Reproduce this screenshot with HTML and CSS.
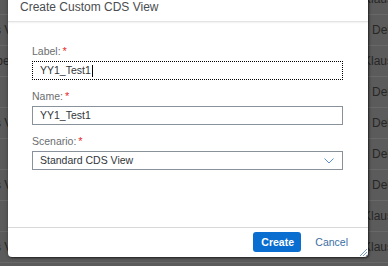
FILE: index.html
```html
<!DOCTYPE html>
<html>
<head>
<meta charset="utf-8">
<link rel="stylesheet" href="styles.css">
</head>
<body>
<div class="backdrop">
  <div class="row"><span class="left"></span><span class="right">Klaus</span></div>
  <div class="row"><span class="left"><span class="view">s View</span></span><span class="right dell">Dell</span></div>
  <div class="row"><span class="left"><span class="cube">Cube</span></span><span class="right">Klaus</span></div>
  <div class="row"><span class="left"></span><span class="right dell">Dell</span></div>
  <div class="row"><span class="left"><span class="view">s View</span></span><span class="right dell">Dell</span></div>
  <div class="row"><span class="left"></span><span class="right dell">Dell</span></div>
  <div class="row"><span class="left"><span class="view">s View</span></span><span class="right dell">Dell</span></div>
  <div class="row"><span class="left"></span><span class="right">Klaus</span></div>
  <div class="row"><span class="left"><span class="view">s View</span></span><span class="right">Klaus</span></div>
  <div class="row"><span class="left"></span><span class="right dell">Dell</span></div>
</div>

<div class="dialog">
  <div class="dialog-header">Create Custom CDS View</div>
  <div class="dialog-content">
    <div class="field">
      <div class="label">Label:<span class="req">*</span></div>
      <div class="input focused">YY1_Test1<span class="caret"></span></div>
    </div>
    <div class="field">
      <div class="label">Name:<span class="req">*</span></div>
      <div class="input">YY1_Test1</div>
    </div>
    <div class="field">
      <div class="label">Scenario:<span class="req">*</span></div>
      <div class="input select">
        <span>Standard CDS View</span>
        <svg class="chevron" width="10" height="6" viewBox="0 0 10 6"><polyline points="0.5,0.5 5,5 9.5,0.5" fill="none" stroke="#5b8fd0" stroke-width="1"/></svg>
      </div>
    </div>
  </div>
  <div class="dialog-footer">
    <button class="btn primary">Create</button>
    <button class="btn link">Cancel</button>
  </div>
  <svg class="grip" width="7" height="7" viewBox="0 0 7 7"><path d="M0,7 L7,0 M3,7 L7,3 M6,7 L7,6" stroke="#7a9cc4" stroke-width="1"/></svg>
</div>
</body>
</html>
```

FILE: styles.css
```css
html, body {
  margin: 0;
  padding: 0;
}
body {
  width: 388px;
  height: 266px;
  overflow: hidden;
  background: #5b5b5b;
  font-family: "Liberation Sans", Arial, sans-serif;
  position: relative;
}
.backdrop {
  margin-top: -16px;
}
.row {
  height: 30px;
  border-bottom: 1px solid #686868;
  display: flex;
  align-items: center;
  font-size: 12px;
  color: #272727;
  white-space: nowrap;
}
.left {
  flex: none;
  width: 363px;
  overflow: visible;
}
.view { margin-left: -5px; }
.cube { margin-left: -19px; }
.right.dell { padding-left: 9px; }

.dialog {
  position: absolute;
  left: 8px;
  top: -18px;
  width: 360px;
  height: 275px;
  background: #fff;
  border-radius: 4px;
  box-shadow: 1px 1px 2px rgba(0,0,0,0.55), 0 0 4px rgba(0,0,0,0.3);
  display: flex;
  flex-direction: column;
}
.dialog-header {
  height: 40px;
  box-sizing: border-box;
  padding: 17px 0 0 12px;
  line-height: 16px;
  font-size: 12px;
  color: #4a4d50;
  border-bottom: 1px solid #e3e3e3;
  box-shadow: 0 1px 2px rgba(0,0,0,0.06);
  background: #fff;
  border-radius: 4px 4px 0 0;
}
.dialog-content {
  flex: 1;
  padding: 21px 25px 0 24px;
  display: flex;
  flex-direction: column;
  gap: 8px;
}
.field {
  display: flex;
  flex-direction: column;
  gap: 1px;
}
.label {
  font-size: 10.5px;
  line-height: 17px;
  color: #6a6d70;
}
.req {
  color: #e52929;
  margin-left: 2px;
  font-size: 11px;
}
.input {
  height: 19px;
  box-sizing: border-box;
  border: 1px solid #89919a;
  padding: 0 7px;
  font-size: 10.5px;
  line-height: 17px;
  color: #32363a;
  display: flex;
  align-items: center;
}
.input.focused {
  border: 1px dotted #000;
}
.caret {
  display: inline-block;
  width: 1px;
  height: 12px;
  background: #000;
  margin-left: 1px;
}
.select {
  justify-content: space-between;
}
.chevron {
  margin-right: 1px;
}
.dialog-footer {
  height: 30px;
  box-sizing: border-box;
  border-top: 1px solid #d8d8d8;
  display: flex;
  align-items: center;
  justify-content: flex-end;
  padding: 0 12px 1px 0;
  gap: 6px;
}
.btn {
  height: 20px;
  border: none;
  border-radius: 3px;
  font-family: "Liberation Sans", Arial, sans-serif;
  font-size: 10.5px;
  padding: 0 8px;
  cursor: pointer;
}
.btn.primary {
  width: 48px;
  background: #0a6ed1;
  color: #fff;
  font-weight: bold;
}
.btn.link {
  background: transparent;
  color: #3a6ea5;
}
.grip {
  position: absolute;
  right: 1px;
  bottom: 1px;
}
```
